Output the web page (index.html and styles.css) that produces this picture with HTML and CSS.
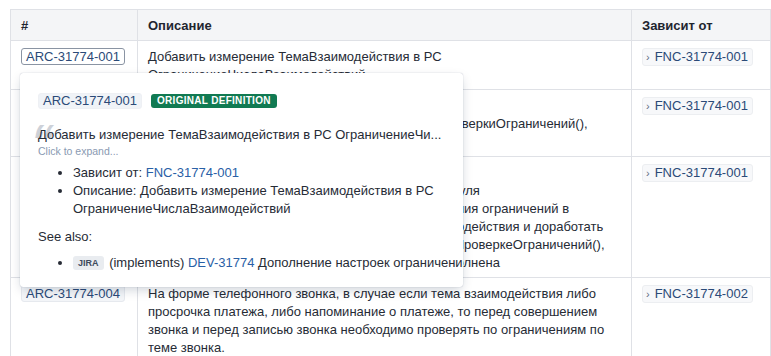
FILE: index.html
```html
<!DOCTYPE html>
<html lang="ru">
<head>
<meta charset="utf-8">
<title>Requirements</title>
<link rel="stylesheet" href="styles.css">
</head>
<body>
<div class="page">
  <table class="reqs">
    <colgroup>
      <col class="c-id">
      <col class="c-desc">
      <col class="c-dep">
    </colgroup>
    <thead>
      <tr><th>#</th><th>Описание</th><th>Зависит от</th></tr>
    </thead>
    <tbody>
      <tr>
        <td><span class="key key-active">ARC-31774-001</span></td>
        <td>Добавить измерение ТемаВзаимодействия в РС ОграничениеЧислаВзаимодействий</td>
        <td><span class="dep"><span class="chev">›</span>FNC-31774-001</span></td>
      </tr>
      <tr>
        <td><span class="key">ARC-31774-002</span></td>
        <td>Добавить вызов процедуры<br>в модуле документа Звонок вызвать ПроцедураПроверкиОграничений(),<br>в модуль формы звонка</td>
        <td><span class="dep"><span class="chev">›</span>FNC-31774-001</span></td>
      </tr>
      <tr>
        <td><span class="key">ARC-31774-003</span></td>
        <td>Добавить процедуру ПроверкаОграничений<br>РаботаСОграничениями из серверного общего модуля<br>для проверки и для контроля корректного выполнения ограничений в<br>в разрезе вида и любой обособленной темы взаимодействия и доработать<br>в модуле документов процедуру ПередЗаписьюПоПроверкеОграничений(),<br>чтобы до записи звонка проверка всегда была выполнена</td>
        <td><span class="dep"><span class="chev">›</span>FNC-31774-001</span></td>
      </tr>
      <tr>
        <td><span class="key">ARC-31774-004</span></td>
        <td>На форме телефонного звонка, в случае если тема взаимодействия либо просрочка платежа, либо напоминание о платеже, то перед совершением звонка и перед записью звонка необходимо проверять по ограничениям по теме звонка.</td>
        <td><span class="dep"><span class="chev">›</span>FNC-31774-002</span></td>
      </tr>
    </tbody>
  </table>

  <div class="popup">
    <div class="pop-head">
      <span class="pop-key">ARC-31774-001</span>
      <span class="badge">Original definition</span>
    </div>
    <div class="quote">
      <span class="qmark">“</span>
      <div class="quote-text">Добавить измерение ТемаВзаимодействия в РС ОграничениеЧи...</div>
      <div class="expand">Click to expand...</div>
    </div>
    <ul class="props">
      <li>Зависит от: <a class="link">FNC-31774-001</a></li>
      <li>Описание: Добавить измерение ТемаВзаимодействия в РС ОграничениеЧислаВзаимодействий</li>
    </ul>
    <div class="see">See also:</div>
    <ul class="props rel">
      <li><span class="jira">JIRA</span> (implements) <a class="link">DEV-31774</a> Дополнение настроек ограничений</li>
    </ul>
  </div>
</div>
</body>
</html>
```

FILE: styles.css
```css
html, body {
  margin: 0;
  padding: 0;
  background: #ffffff;
}
body {
  font-family: "Liberation Sans", Arial, sans-serif;
  font-size: 13px;
  line-height: 18px;
  color: #262b35;
}
.page {
  position: relative;
  padding: 9px 0 0 10px;
}
.reqs {
  border-collapse: collapse;
  table-layout: fixed;
  width: 760px;
}
.c-id { width: 127px; }
.c-desc { width: 494px; }
.c-dep { width: 139px; }
.reqs th, .reqs td {
  border: 1px solid #dfe1e6;
  padding: 7px 10px 5px 10px;
  text-align: left;
  vertical-align: top;
}
.reqs th {
  background: #f4f5f7;
  font-weight: bold;
  color: #1f2530;
}
.key {
  display: inline-block;
  line-height: 15px;
  padding: 0 4px;
  border: 1px solid #e6e9ee;
  border-radius: 3px;
  background: #f4f6f9;
  color: #2b4a78;
}
.key-active {
  border-color: #8a94a3;
  background: #ffffff;
}
.dep {
  display: inline-block;
  line-height: 15px;
  padding: 0 4px 0 3px;
  border: 1px solid #eceef1;
  border-radius: 3px;
  background: #f7f8fa;
  color: #2b4a78;
}
.chev {
  display: inline-block;
  color: #5e6c84;
  font-size: 11px;
  margin-right: 5px;
}

.popup {
  position: absolute;
  left: 20px;
  top: 73px;
  width: 443px;
  height: 214px;
  box-sizing: border-box;
  padding: 19px 24px 14px 18px;
  background: #ffffff;
  border-radius: 3px;
  box-shadow: 0 4px 12px -2px rgba(9, 30, 66, 0.22), 0 0 1px rgba(9, 30, 66, 0.35);
  overflow: hidden;
  z-index: 2;
}
.pop-head {
  display: flex;
  align-items: center;
  gap: 9px;
  height: 18px;
}
.pop-key {
  display: inline-block;
  line-height: 14px;
  padding: 0 4px 0 4px;
  border-radius: 3px;
  background: #f0f3f7;
  border: 1px solid #eef0f4;
  color: #2b4a78;
}
.badge {
  display: inline-block;
  height: 14px;
  line-height: 14px;
  padding: 0 6px;
  border-radius: 3px;
  background: #117a52;
  color: #ffffff;
  font-size: 10px;
  font-weight: bold;
  letter-spacing: 0.3px;
  text-transform: uppercase;
}
.quote {
  position: relative;
  margin-top: 16px;
}
.qmark {
  position: absolute;
  left: -7px;
  top: -8px;
  font-family: "Liberation Sans", sans-serif;
  font-size: 46px;
  line-height: 46px;
  font-weight: bold;
  font-style: italic;
  color: #cdd1d8;
  z-index: 0;
}
.quote-text {
  position: relative;
  white-space: nowrap;
  z-index: 1;
}
.expand {
  position: relative;
  font-size: 10.5px;
  line-height: 14px;
  color: #8a9ab2;
  z-index: 1;
}
.props {
  margin: 6px 0 0 0;
  padding: 0 0 0 35px;
  list-style: disc;
}
.link {
  color: #2960a6;
  text-decoration: none;
}
.see {
  margin-top: 10px;
}
.rel {
  margin-top: 8px;
}
.rel li {
  white-space: nowrap;
}
.jira {
  display: inline-block;
  line-height: 14px;
  padding: 0 5px;
  margin-right: 2px;
  border-radius: 3px;
  background: #e9ecf0;
  color: #3d4a5c;
  font-size: 9px;
  font-weight: bold;
  vertical-align: 1px;
}
```
